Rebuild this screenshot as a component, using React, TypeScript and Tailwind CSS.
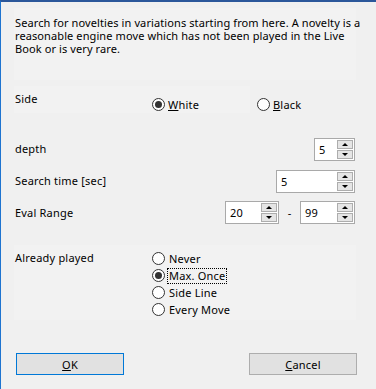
import React from "react";

const Radio = ({ checked }: { checked?: boolean }) => (
  <span className="w-[13px] h-[13px] rounded-full border border-[#333333] bg-white flex items-center justify-center shrink-0">
    {checked && <span className="w-[7px] h-[7px] rounded-full bg-[#333333]" />}
  </span>
);

const Arrow = ({ up }: { up?: boolean }) => (
  <svg width="6" height="3" viewBox="0 0 6 3">
    {up ? <polygon points="0,3 6,3 3,0" fill="#000" /> : <polygon points="0,0 6,0 3,3" fill="#000" />}
  </svg>
);

const SpinBox = ({ value, width }: { value: string; width: string }) => (
  <div className={`flex h-[23px] border border-[#a9a9a9] bg-white ${width}`}>
    <span className="flex-1 pl-[4px] leading-[21px] text-black">{value}</span>
    <div className="flex flex-col gap-[1px] py-[1px] pr-[1px] w-[17px]">
      <div className="flex-1 border border-[#adadad] bg-[#e5e5e5] flex items-center justify-center">
        <Arrow up />
      </div>
      <div className="flex-1 border border-[#adadad] bg-[#e5e5e5] flex items-center justify-center">
        <Arrow />
      </div>
    </div>
  </div>
);

const options = ["Never", "Max. Once", "Side Line", "Every Move"];

export default function App() {
  return (
    <div className="w-[376px] h-[389px] overflow-hidden bg-[#f0f0f0] border-t-2 border-t-[#2b579a] border-l border-l-[#1e74d0] pl-[13px] pr-[20px] flex flex-col font-['Noto_Sans',sans-serif] text-[11px] leading-[13px] tracking-[0.2px] text-black">
      {/* description */}
      <div className="mt-[6px] h-[72px] bg-[#f2f2f2] pl-[1px] pt-[8px]">
        <p className="w-[352px] tracking-[0.1px]">
          Search for novelties in variations starting from here. A novelty is a reasonable engine move which has not been played in the Live Book or is very rare.
        </p>
      </div>

      {/* side */}
      <div className="mt-[6px] h-[27px] w-[236px] bg-[#f2f2f2] flex">
        <div className="w-[138px] shrink-0 pl-[1px] pt-[6px]">Side</div>
        <div className="flex shrink-0 pt-[9px]">
          <label className="flex items-center gap-[3px] w-[105px]">
            <Radio checked />
            <span>
              <span className="underline">W</span>hite
            </span>
          </label>
          <label className="flex items-center gap-[3px]">
            <Radio />
            <span>
              <span className="underline">B</span>lack
            </span>
          </label>
        </div>
      </div>

      {/* depth */}
      <div className="mt-[25px] flex items-center justify-between mr-[1px]">
        <span className="pl-[1px] mb-[3px]">depth</span>
        <SpinBox value="5" width="w-[41px]" />
      </div>

      {/* search time */}
      <div className="mt-[9px] flex items-center justify-between mr-[1px]">
        <span className="pl-[1px] mb-[3px]">Search time [sec]</span>
        <SpinBox value="5" width="w-[79px]" />
      </div>

      {/* eval range */}
      <div className="mt-[8px] flex items-center justify-between mr-[1px]">
        <span className="pl-[1px]">Eval Range</span>
        <div className="flex items-center">
          <SpinBox value="20" width="w-[54px]" />
          <span className="w-[21px] text-center">-</span>
          <SpinBox value="99" width="w-[55px]" />
        </div>
      </div>

      {/* already played */}
      <div className="mt-[21px] h-[75px] bg-[#f2f2f2] flex pt-[5px]">
        <div className="w-[138px] shrink-0 pl-[1px] pt-[1px]">Already played</div>
        <div className="flex flex-col">
          {options.map((o, i) => (
            <label key={o} className="flex items-center gap-[2px] h-[17px]">
              <Radio checked={i === 1} />
              <span className={i === 1 ? "border border-dotted border-black px-[1px] leading-[14px]" : "px-[2px]"}>{o}</span>
            </label>
          ))}
        </div>
      </div>

      {/* buttons */}
      <div className="mt-[33px] flex justify-between pl-[2px] -mr-[1px]">
        <button className="w-[108px] h-[22px] border border-[#0078d7] bg-[#e1e1e1] text-black">
          <span className="underline">O</span>K
        </button>
        <button className="w-[108px] h-[22px] border border-[#adadad] bg-[#e1e1e1] text-black">
          <span className="underline">C</span>ancel
        </button>
      </div>
    </div>
  );
}
